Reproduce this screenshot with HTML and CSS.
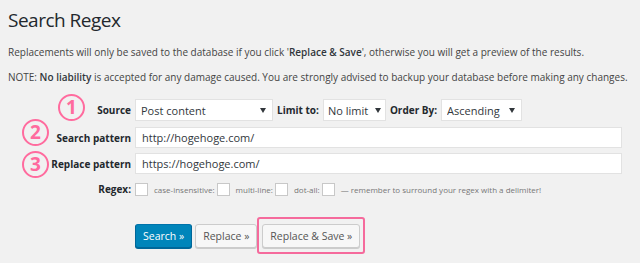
FILE: index.html
```html
<!DOCTYPE html>
<html lang="en">
<head>
    <meta charset="UTF-8">
    <title>Search Regex</title>
    <link rel="stylesheet" href="styles.css">
</head>
<body>
    <div class="wrap">
        <h1>Search Regex</h1>
        <p class="intro">Replacements will only be saved to the database if you click '<strong>Replace &amp; Save</strong>', otherwise you will get a preview of the results.</p>
        <p class="note">NOTE: <strong>No liability</strong> is accepted for any damage caused. You are strongly advised to backup your database before making any changes.</p>

        <form class="search-form">
            <div class="row row-source">
                <label class="field-label">
                    <span class="step step-1">1</span>
                    Source
                </label>
                <div class="field field-inline">
                    <span class="select select-source">
                        <select><option>Post content</option></select>
                    </span>
                    <span class="inline-label">Limit to:</span>
                    <span class="select select-limit">
                        <select><option>No limit</option></select>
                    </span>
                    <span class="inline-label">Order By:</span>
                    <span class="select select-order">
                        <select><option>Ascending</option></select>
                    </span>
                </div>
            </div>

            <div class="row">
                <label class="field-label">
                    <span class="step step-2">2</span>
                    Search pattern
                </label>
                <div class="field">
                    <input type="text" class="text-input" value="http://hogehoge.com/">
                </div>
            </div>

            <div class="row">
                <label class="field-label">
                    <span class="step step-3">3</span>
                    Replace pattern
                </label>
                <div class="field">
                    <input type="text" class="text-input" value="https://hogehoge.com/">
                </div>
            </div>

            <div class="row row-regex">
                <label class="field-label">Regex:</label>
                <div class="field field-inline regex-options">
                    <input type="checkbox" class="check">
                    <span>case-insensitive:</span>
                    <input type="checkbox" class="check">
                    <span>multi-line:</span>
                    <input type="checkbox" class="check">
                    <span>dot-all:</span>
                    <input type="checkbox" class="check">
                    <span>— remember to surround your regex with a delimiter!</span>
                </div>
            </div>

            <div class="actions">
                <button type="button" class="btn btn-primary">Search »</button>
                <button type="button" class="btn">Replace »</button>
                <span class="highlight">
                    <button type="button" class="btn">Replace &amp; Save »</button>
                </span>
            </div>
        </form>
    </div>
</body>
</html>
```

FILE: styles.css
```css
body {
    margin: 0;
    background: #f1f1f1;
    color: #444;
    font-family: 'Open Sans', 'Noto Sans', sans-serif;
    font-size: 10px;
}

.wrap {
    padding: 8px 8px;
}

h1 {
    margin: 0;
    font-size: 19px;
    font-weight: 400;
    letter-spacing: -0.5px;
    line-height: 24px;
    color: #23282d;
}

p {
    margin: 0;
    line-height: 16px;
}

.intro {
    margin-top: 12px;
}

.note {
    margin-top: 9px;
}

strong {
    color: #32373c;
    font-weight: 600;
}

.search-form {
    margin-top: 14px;
}

.row {
    display: flex;
    align-items: center;
    margin-bottom: 5px;
}

.field-label {
    position: relative;
    width: 123px;
    margin-right: 4px;
    text-align: right;
    font-weight: 700;
    color: #23282d;
    font-size: 10px;
}

.field {
    flex: 1;
}

.field-inline {
    display: flex;
    align-items: center;
}

.inline-label {
    margin: 0 4px;
    font-weight: 700;
    color: #23282d;
}

.select {
    position: relative;
    display: inline-block;
}

.select select {
    appearance: none;
    height: 22px;
    border: 1px solid #e2e2e2;
    background: #fff;
    font-family: inherit;
    font-size: 11px;
    color: #32373c;
    padding: 0 14px 0 5px;
}

.select::after {
    content: "";
    position: absolute;
    right: 7px;
    top: 9px;
    border-left: 3px solid transparent;
    border-right: 3px solid transparent;
    border-top: 5px solid #32373c;
}

.select-source select { width: 138px; }
.select-limit select { width: 63px; padding: 0 12px 0 4px; }
.select-limit::after { right: 5px; }
.select-order select { width: 81px; }

.text-input {
    box-sizing: border-box;
    width: 487px;
    height: 21px;
    border: 1px solid #e2e2e2;
    background: #fff;
    padding: 0 6px;
    font-family: inherit;
    font-size: 11px;
    color: #32373c;
}

.row-source {
    margin-bottom: 6px;
}

.row-regex {
    margin-top: 8px;
}

.regex-options {
    font-size: 8px;
    color: #777;
}

.regex-options span {
    margin: 0 2px 0 6px;
}

.check {
    appearance: none;
    box-sizing: border-box;
    width: 13px;
    height: 13px;
    margin: 0;
    border: 1px solid #c8c8c8;
    background: #fff;
}

.actions {
    margin-top: 28px;
    padding-left: 127px;
    display: flex;
    align-items: center;
}

.btn {
    height: 24px;
    padding: 0 7px;
    border: 1px solid #ccc;
    border-radius: 3px;
    background: #f7f7f7;
    box-shadow: 0 1px 0 #ccc;
    color: #555;
    font-family: inherit;
    font-size: 10.5px;
    margin-right: 3px;
}

.btn-primary {
    background: #0085ba;
    border-color: #0073aa #006799 #006799;
    box-shadow: 0 1px 0 #006799;
    color: #fff;
}

.highlight {
    position: relative;
    margin-left: 2px;
    display: inline-flex;
}

.highlight::before {
    content: "";
    position: absolute;
    top: -7px;
    bottom: -6px;
    left: -5px;
    right: -2px;
    border: 2px solid #f56a9c;
    border-radius: 3px;
}

.step {
    position: absolute;
    box-sizing: border-box;
    width: 27px;
    height: 27px;
    border: 2.5px solid #ff6b9e;
    border-radius: 50%;
    color: #ff6b9e;
    font-size: 19px;
    font-weight: 700;
    line-height: 22px;
    text-align: center;
}

.step-1 { left: 50px; top: -9px; }
.step-2 { left: 14px; top: -12px; }
.step-3 { left: 14px; top: -6px; }
```
